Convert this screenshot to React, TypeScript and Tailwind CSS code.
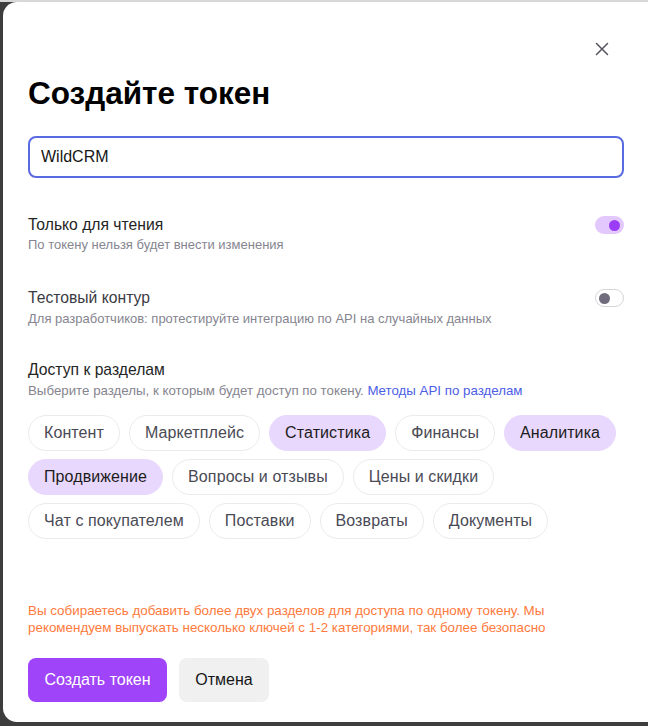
import React, { useState } from 'react';

const sections = [
  'Контент',
  'Маркетплейс',
  'Статистика',
  'Финансы',
  'Аналитика',
  'Продвижение',
  'Вопросы и отзывы',
  'Цены и скидки',
  'Чат с покупателем',
  'Поставки',
  'Возвраты',
  'Документы',
];

function Toggle({ on, onClick }: { on: boolean; onClick: () => void }) {
  return (
    <button
      onClick={onClick}
      className={
        on
          ? 'flex h-[18px] w-[29px] shrink-0 items-center justify-end rounded-full bg-[#e2c8fd] px-[4px]'
          : 'flex h-[18px] w-[29px] shrink-0 items-center justify-start rounded-full border-[1.5px] border-[#d6d6d9] bg-white px-[3px]'
      }
    >
      <span className={on ? 'h-[11px] w-[11px] rounded-full bg-[#9b3cf6]' : 'h-[11px] w-[11px] rounded-full bg-[#706c7e]'} />
    </button>
  );
}

export default function App() {
  const [readOnly, setReadOnly] = useState(true);
  const [testMode, setTestMode] = useState(false);
  const [selected, setSelected] = useState<string[]>(['Статистика', 'Аналитика', 'Продвижение']);

  const toggleSection = (name: string) => {
    setSelected((prev) => (prev.includes(name) ? prev.filter((s) => s !== name) : [...prev, name]));
  };

  return (
    <div className="h-[726px] w-[648px] overflow-hidden border-t-2 border-[#d8d8d8] bg-[#3d3d3d] pl-[3px] font-['Liberation_Sans',Arial,sans-serif]">
      <div className="relative h-[720px] w-[660px] rounded-[14px] bg-white px-[25px] pt-[73px]">
        {/* close */}
        <button className="absolute left-[592px] top-[40px] flex h-[14px] w-[14px] items-center justify-center">
          <svg width="14" height="14" viewBox="0 0 14 14" fill="none" stroke="#55545e" strokeWidth="1.5" strokeLinecap="round">
            <path d="M1.5 1.5l11 11M12.5 1.5l-11 11" />
          </svg>
        </button>

        <h1 className="text-[31.5px] font-bold leading-[36px] text-black">Создайте токен</h1>

        <div className="mt-[25px] flex h-[42px] w-[596px] items-center rounded-[8px] border-2 border-[#5a6ae0] px-[11px]">
          <input
            defaultValue="WildCRM"
            className="w-full bg-transparent text-[16px] text-[#161616] outline-none"
          />
        </div>

        <div className="mt-[37px] flex w-[596px] items-start justify-between">
          <div>
            <div className="text-[15.7px] leading-[20px] text-[#242424]">Только для чтения</div>
            <div className="mt-[2px] text-[13px] leading-[16px] text-[#86858f]">По токену нельзя будет внести изменения</div>
          </div>
          <div className="pt-[1px]">
            <Toggle on={readOnly} onClick={() => setReadOnly(!readOnly)} />
          </div>
        </div>

        <div className="mt-[35px] flex w-[596px] items-start justify-between">
          <div>
            <div className="text-[15.7px] leading-[20px] text-[#3a3a42]">Тестовый контур</div>
            <div className="mt-[3px] text-[13px] leading-[16px] text-[#86858f]">
              Для разработчиков: протестируйте интеграцию по API на случайных данных
            </div>
          </div>
          <div className="pt-[1px]">
            <Toggle on={testMode} onClick={() => setTestMode(!testMode)} />
          </div>
        </div>

        <div className="mt-[33px] text-[15.7px] leading-[20px] text-[#242424]">Доступ к разделам</div>
        <div className="mt-[3px] text-[13.3px] leading-[16px] text-[#86858f]">
          Выберите разделы, к которым будет доступ по токену.{' '}
          <a className="text-[#4c5de6]">Методы API по разделам</a>
        </div>

        <div className="mt-[16px] flex w-[600px] flex-wrap gap-x-[9px] gap-y-[8px]">
          {sections.map((s) => {
            const on = selected.includes(s);
            return (
              <button
                key={s}
                onClick={() => toggleSection(s)}
                className={
                  on
                    ? 'h-[36px] rounded-full border border-[#e9d8fd] bg-[#e9d8fd] px-[15px] text-[16px] tracking-[0.1px] text-[#1c1c1c]'
                    : 'h-[36px] rounded-full border border-[#ebebee] bg-white px-[15px] text-[16px] tracking-[0.1px] text-[#4a4a55]'
                }
              >
                {s}
              </button>
            );
          })}
        </div>

        <p className="mt-[63px] w-[580px] text-[13.4px] leading-[17px] text-[#ff7a3c]">
          Вы собираетесь добавить более двух разделов для доступа по одному токену. Мы рекомендуем выпускать несколько
          ключей с 1-2 категориями, так более безопасно
        </p>

        <div className="mt-[22px] flex gap-[12px]">
          <button className="h-[44px] w-[139px] rounded-[8px] bg-[#9f44f9] text-[16px] text-white">Создать токен</button>
          <button className="h-[44px] w-[90px] rounded-[8px] bg-[#f0f0f1] text-[16px] text-[#161616]">Отмена</button>
        </div>
      </div>
    </div>
  );
}
